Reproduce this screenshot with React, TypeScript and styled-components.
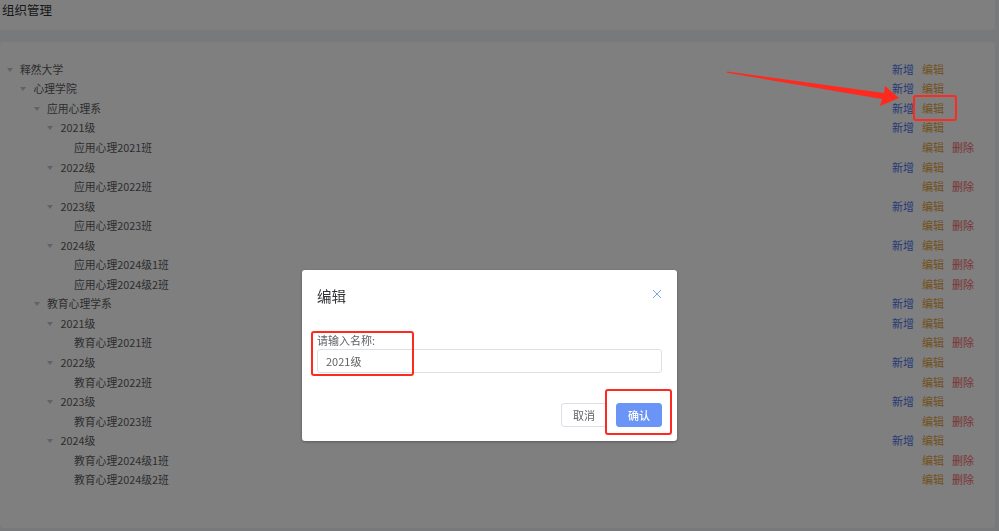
import React from "react";
import styled, { createGlobalStyle } from "styled-components";

const GlobalStyle = createGlobalStyle`
  html, body {
    margin: 0;
    padding: 0;
    background: #f0f2f5;
    font-family: "Noto Sans CJK SC", "Liberation Sans", sans-serif;
  }
  * {
    box-sizing: border-box;
  }
`;

interface TreeNode {
  label: string;
  level: number;
  leaf?: boolean;
}

const nodes: TreeNode[] = [
  { label: "释然大学", level: 0 },
  { label: "心理学院", level: 1 },
  { label: "应用心理系", level: 2 },
  { label: "2021级", level: 3 },
  { label: "应用心理2021班", level: 4, leaf: true },
  { label: "2022级", level: 3 },
  { label: "应用心理2022班", level: 4, leaf: true },
  { label: "2023级", level: 3 },
  { label: "应用心理2023班", level: 4, leaf: true },
  { label: "2024级", level: 3 },
  { label: "应用心理2024级1班", level: 4, leaf: true },
  { label: "应用心理2024级2班", level: 4, leaf: true },
  { label: "教育心理学系", level: 2 },
  { label: "2021级", level: 3 },
  { label: "教育心理2021班", level: 4, leaf: true },
  { label: "2022级", level: 3 },
  { label: "教育心理2022班", level: 4, leaf: true },
  { label: "2023级", level: 3 },
  { label: "教育心理2023班", level: 4, leaf: true },
  { label: "2024级", level: 3 },
  { label: "教育心理2024级1班", level: 4, leaf: true },
  { label: "教育心理2024级2班", level: 4, leaf: true },
];

export default function App() {
  return (
    <>
      <GlobalStyle />
      <Page>
        <HeaderCard>
          <PageTitle>组织管理</PageTitle>
        </HeaderCard>
        <ContentCard>
          <Tree>
            {nodes.map((node, i) => (
              <TreeRow key={i} $level={node.level}>
                <Caret $hidden={!!node.leaf} />
                <NodeLabel>{node.label}</NodeLabel>
                <Actions>
                  <ActionLink $kind="add" $hidden={!!node.leaf}>
                    新增
                  </ActionLink>
                  <ActionLink $kind="edit">编辑</ActionLink>
                  <ActionLink $kind="delete" $hidden={!node.leaf}>
                    删除
                  </ActionLink>
                </Actions>
              </TreeRow>
            ))}
          </Tree>
        </ContentCard>
      </Page>

      <Mask>
        <Dialog>
          <DialogHeader>
            <DialogTitle>编辑</DialogTitle>
            <CloseButton>
              <svg width="10" height="10" viewBox="0 0 10 10">
                <path
                  d="M1 1L9 9M9 1L1 9"
                  stroke="#7ea3f0"
                  strokeWidth="1"
                  fill="none"
                />
              </svg>
            </CloseButton>
          </DialogHeader>
          <DialogBody>
            <FieldLabel>请输入名称:</FieldLabel>
            <TextInput defaultValue="2021级" />
          </DialogBody>
          <DialogFooter>
            <Button>取消</Button>
            <Button $primary>确认</Button>
          </DialogFooter>
        </Dialog>
      </Mask>

      {/* red annotations drawn over the screenshot */}
      <Highlight style={{ left: 311, top: 331, width: 103, height: 45 }} />
      <Highlight style={{ left: 605, top: 389, width: 67, height: 46 }} />
      <Highlight style={{ left: 913, top: 95, width: 44, height: 26 }} />
      <ArrowSvg width="999" height="531" viewBox="0 0 999 531">
        <polygon
          points="727,71.5 884,93 885,86 899,98 880,106 882,99 727,72.8"
          fill="#ff2a1f"
        />
      </ArrowSvg>
    </>
  );
}

const Page = styled.div`
  width: 995px;
  height: 528px;
  display: flex;
  flex-direction: column;
  gap: 12px;
`;

const HeaderCard = styled.div`
  height: 30px;
  background: #fff;
  border-radius: 0 0 4px 0;
  display: flex;
  align-items: center;
  padding-left: 2px;
`;

const PageTitle = styled.h1`
  margin: 0 0 11px;
  font-size: 12.5px;
  font-weight: 400;
  color: #303133;
`;

const ContentCard = styled.div`
  flex: 1;
  background: #fff;
  border-radius: 4px;
  padding: 17px 19px 0 0;
`;

const Tree = styled.div`
  display: flex;
  flex-direction: column;
`;

const TreeRow = styled.div<{ $level: number }>`
  height: 19.55px;
  display: flex;
  align-items: center;
  padding-left: ${(p) => 3 + p.$level * 13.5}px;
  font-size: 10.8px;
  color: #5a5c60;
`;

const Caret = styled.span<{ $hidden: boolean }>`
  width: 13px;
  height: 100%;
  margin-right: 4px;
  display: flex;
  align-items: center;
  justify-content: center;
  &::before {
    content: "";
    display: ${(p) => (p.$hidden ? "none" : "block")};
    margin-top: 2px;
    border-left: 3px solid transparent;
    border-right: 3px solid transparent;
    border-top: 4px solid #c0c4cc;
  }
`;

const NodeLabel = styled.span`
  flex: 1;
  white-space: nowrap;
`;

const Actions = styled.div`
  display: grid;
  grid-template-columns: repeat(3, 24px);
  column-gap: 6px;
`;

const actionColors = {
  add: "#4d74ec",
  edit: "#e6a23c",
  delete: "#f56c6c",
};

const ActionLink = styled.span<{
  $kind: "add" | "edit" | "delete";
  $hidden?: boolean;
}>`
  font-size: 11px;
  color: ${(p) => actionColors[p.$kind]};
  visibility: ${(p) => (p.$hidden ? "hidden" : "visible")};
  white-space: nowrap;
  cursor: pointer;
`;

const Mask = styled.div`
  position: fixed;
  inset: 0;
  background: rgba(0, 0, 0, 0.5);
`;

const Dialog = styled.div`
  position: absolute;
  left: 302px;
  top: 270px;
  width: 375px;
  background: #fff;
  border-radius: 3px;
  box-shadow: 0 1px 3px rgba(0, 0, 0, 0.3);
`;

const DialogHeader = styled.div`
  display: flex;
  align-items: center;
  justify-content: space-between;
  padding: 15px 15px 0;
  height: 36px;
`;

const DialogTitle = styled.span`
  font-size: 14.5px;
  line-height: 20px;
  color: #303133;
`;

const CloseButton = styled.span`
  display: flex;
  margin-top: -4px;
`;

const DialogBody = styled.div`
  padding: 27px 15px 0;
  display: flex;
  flex-direction: column;
  gap: 2px;
`;

const FieldLabel = styled.label`
  font-size: 11px;
  line-height: 14px;
  color: #606266;
`;

const TextInput = styled.input`
  height: 24px;
  border: 1px solid #dcdfe6;
  border-radius: 3px;
  padding: 0 8px;
  font-size: 11px;
  color: #606266;
  font-family: inherit;
  outline: none;
`;

const DialogFooter = styled.div`
  display: flex;
  justify-content: flex-end;
  gap: 9px;
  padding: 30px 15px 14px;
`;

const Button = styled.button<{ $primary?: boolean }>`
  height: 24px;
  padding: 0 11px;
  font-size: 11px;
  font-family: inherit;
  border-radius: 3px;
  border: 1px solid ${(p) => (p.$primary ? "#6a95f6" : "#dcdfe6")};
  background: ${(p) => (p.$primary ? "#6a95f6" : "#fff")};
  color: ${(p) => (p.$primary ? "#fff" : "#606266")};
  font-weight: ${(p) => (p.$primary ? 500 : 400)};
`;

const Highlight = styled.div`
  position: absolute;
  border: 2px solid #ff2a1f;
  border-radius: 3px;
`;

const ArrowSvg = styled.svg`
  position: absolute;
  left: 0;
  top: 0;
  pointer-events: none;
`;
